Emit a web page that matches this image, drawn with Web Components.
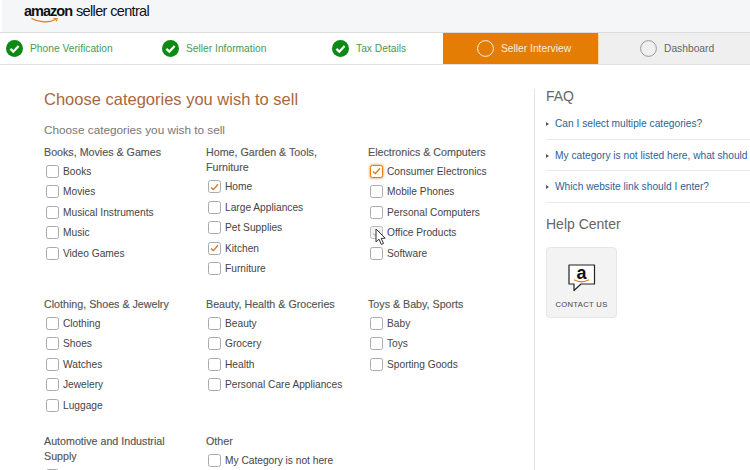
<!DOCTYPE html>
<html lang="en">
<head>
<meta charset="utf-8">
<title>Seller Central</title>
<style>
	html, body { margin: 0; height: 470px; overflow: hidden; background: #fff; }
	body { font-family: 'Liberation Sans', Arial, sans-serif; }
</style>
</head>
<body>
<seller-page>
	<seller-header slot="header"></seller-header>

	<step-bar slot="steps">
		<step-item state="done" width="155" inset="6">Phone Verification</step-item>
		<step-item state="done" width="170" inset="7">Seller Information</step-item>
		<step-item state="done" width="118" inset="7">Tax Details</step-item>
		<step-item state="active" width="156" inset="34">Seller Interview</step-item>
		<step-item state="todo" width="151" inset="41">Dashboard</step-item>
	</step-bar>

	<category-form slot="main">
		<category-group title="Books, Movies &amp; Games">
			<category-check>Books</category-check>
			<category-check>Movies</category-check>
			<category-check>Musical Instruments</category-check>
			<category-check>Music</category-check>
			<category-check>Video Games</category-check>
		</category-group>
		<category-group title="Home, Garden &amp; Tools, Furniture">
			<category-check checked>Home</category-check>
			<category-check>Large Appliances</category-check>
			<category-check>Pet Supplies</category-check>
			<category-check checked>Kitchen</category-check>
			<category-check>Furniture</category-check>
		</category-group>
		<category-group title="Electronics &amp; Computers">
			<category-check checked focused>Consumer Electronics</category-check>
			<category-check>Mobile Phones</category-check>
			<category-check>Personal Computers</category-check>
			<category-check hovered>Office Products</category-check>
			<category-check>Software</category-check>
		</category-group>
		<category-group title="Clothing, Shoes &amp; Jewelry">
			<category-check>Clothing</category-check>
			<category-check>Shoes</category-check>
			<category-check>Watches</category-check>
			<category-check>Jewelery</category-check>
			<category-check>Luggage</category-check>
		</category-group>
		<category-group title="Beauty, Health &amp; Groceries">
			<category-check>Beauty</category-check>
			<category-check>Grocery</category-check>
			<category-check>Health</category-check>
			<category-check>Personal Care Appliances</category-check>
		</category-group>
		<category-group title="Toys &amp; Baby, Sports">
			<category-check>Baby</category-check>
			<category-check>Toys</category-check>
			<category-check>Sporting Goods</category-check>
		</category-group>
		<category-group title="Automotive and Industrial Supply">
			<category-check></category-check>
		</category-group>
		<category-group title="Other">
			<category-check>My Category is not here</category-check>
		</category-group>
	</category-form>

	<help-panel slot="side">
		<faq-link>Can I select multiple categories?</faq-link>
		<faq-link>My category is not listed here, what should</faq-link>
		<faq-link>Which website link should I enter?</faq-link>
	</help-panel>
</seller-page>

<script>
(() => {
	// ==========
	// Templates.
	// ==========

	const CHECK_DONE = `
		<svg width="17" height="17" viewBox="0 0 17 17" aria-hidden="true">
			<circle cx="8.5" cy="8.5" r="8.5" fill="#0c8a14"/>
			<path d="M4.4 8.9 7.3 11.7 12.6 6" fill="none" stroke="#fff" stroke-width="2.3"/>
		</svg>`;

	const RING = `
		<svg width="17" height="17" viewBox="0 0 17 17" aria-hidden="true">
			<circle cx="8.5" cy="8.5" r="7.9" fill="none" stroke="currentColor" stroke-width="1"/>
		</svg>`;

	const CURSOR = `
		<svg class="cursor" width="12" height="18" viewBox="0 0 12 18" aria-hidden="true">
			<path d="M1 1 1 14 4 11.2 6.3 16.4 8.5 15.4 6.2 10.4 10.2 10.2Z" fill="#fff" stroke="#333" stroke-width="1"/>
		</svg>`;

	// ==========
	// Component.
	// ==========

	class Base extends HTMLElement {
		constructor(html) {
			super();
			this.attachShadow({ mode: 'open' }).innerHTML = html;
		}
	}

	class SellerPage extends Base {
		constructor() {
			super(`
				<style>
					:host { display: block; width: 750px; height: 470px; overflow: hidden; }
					.content { display: flex; align-items: stretch; height: 406px; }
					.main { width: 534px; flex: none; }
					.side { flex: 1; min-width: 0; margin-top: 24px; border-left: 1px solid #e4e4e4; }
				</style>
				<slot name="header"></slot>
				<slot name="steps"></slot>
				<div class="content">
					<div class="main"><slot name="main"></slot></div>
					<div class="side"><slot name="side"></slot></div>
				</div>
			`);
		}
	}

	class SellerHeader extends Base {
		constructor() {
			super(`
				<style>
					:host { display: block; height: 32px; margin-left: 2px; background: #f5f6f8; }
					.logo { display: flex; align-items: baseline; padding: 3px 0 0 22px; color: #111; position: relative; }
					.amazon { font-size: 14.5px; font-weight: bold; letter-spacing: -1px; }
					.name { font-size: 14.5px; margin-left: 4px; letter-spacing: -0.65px; }
					svg { position: absolute; left: 29px; top: 18px; }
				</style>
				<div class="logo">
					<span class="amazon">amazon</span><span class="name">seller central</span>
					<svg width="28" height="5" viewBox="0 0 28 5" aria-hidden="true">
						<path d="M0.5 0.5C8 4.6 18 5 25 1.2" fill="none" stroke="#e47911" stroke-width="1.2"/>
						<path d="M22.5 0.4 26.4 0.3 25.2 3.4" fill="none" stroke="#e47911" stroke-width="1"/>
					</svg>
				</div>
			`);
		}
	}

	class StepBar extends Base {
		constructor() {
			super(`
				<style>
					:host { display: flex; height: 31px; border-top: 1px solid #dcdcdc; border-bottom: 1px solid #e2e2e2; }
				</style>
				<slot></slot>
			`);
		}
	}

	class StepItem extends Base {
		constructor() {
			super(`
				<style>
					:host { display: flex; align-items: center; gap: 7px; box-sizing: border-box; font-size: 10.25px; color: #4a9a50; }
					:host([state="active"]) { background: #e47d04; color: #fdeed8; border-right: 1px solid #f8dcae; }
					:host([state="todo"]) { background: #efefef; color: #666; }
					:host([state="todo"]) svg { color: #999; }
					svg { display: block; flex: none; }
				</style>
				<span class="icon"></span>
				<slot></slot>
			`);
		}

		connectedCallback() {
			this.style.width = `${this.getAttribute('width')}px`;
			this.style.paddingLeft = `${this.getAttribute('inset')}px`;
			const icon = this.shadowRoot.querySelector('.icon');
			icon.innerHTML = this.getAttribute('state') === 'done' ? CHECK_DONE : RING;
		}
	}

	class CategoryForm extends Base {
		constructor() {
			super(`
				<style>
					:host { display: block; padding: 24px 0 0 44px; }
					h1 { margin: 0; font-size: 16.5px; line-height: 20px; font-weight: normal; color: #a9673d; }
					h2 { margin: 11.5px 0 6.25px; font-size: 11.75px; line-height: 18px; font-weight: normal; color: #777; }
					.grid { display: grid; grid-template-columns: 162px 162px 162px; grid-template-rows: 152px 137px auto; }
				</style>
				<h1>Choose categories you wish to sell</h1>
				<h2>Choose categories you wish to sell</h2>
				<div class="grid"><slot></slot></div>
			`);
		}
	}

	class CategoryGroup extends Base {
		constructor() {
			super(`
				<style>
					:host { display: block; }
					.title { width: 135px; font-size: 10.7px; line-height: 15.5px; color: #555; -webkit-text-stroke: 0.15px #555; margin-bottom: 1px; }
				</style>
				<div class="title"></div>
				<slot></slot>
			`);
		}

		connectedCallback() {
			this.shadowRoot.querySelector('.title').textContent = this.getAttribute('title');
		}
	}

	class CategoryCheck extends Base {
		constructor() {
			super(`
				<style>
					:host { display: flex; align-items: center; gap: 4px; height: 20.4px; padding-left: 2px; font-size: 10.2px; color: #444; position: relative; }
					.box { width: 11px; height: 11px; flex: none; border: 1px solid #aaa; border-radius: 2.5px; background: #fff; display: flex; align-items: center; justify-content: center; }
					:host([focused]) .box { border-color: #e77c00; box-shadow: 0 0 2px 1px #f3c189; }
					:host([hovered]) .box { border-color: #bbb; background: #f4f4f4; }
					.tick { display: none; }
					:host([checked]) .tick { display: block; }
					:host([hovered]) .tick { display: block; }
					:host([hovered]) .tick path { stroke: #c4c4c4; }
					.cursor { position: absolute; left: 7px; top: 6px; }
				</style>
				<span class="box">
					<svg class="tick" width="9" height="8" viewBox="0 0 9 8" aria-hidden="true">
						<path d="M1 4.4 3.4 6.6 8 1.2" fill="none" stroke="#d9762a" stroke-width="1.4"/>
					</svg>
				</span>
				<slot></slot>
			`);
		}

		connectedCallback() {
			if (this.hasAttribute('hovered')) {
				this.shadowRoot.querySelector('.box').insertAdjacentHTML('afterend', CURSOR);
			}
		}
	}

	class HelpPanel extends Base {
		constructor() {
			super(`
				<style>
					:host { display: block; padding-left: 11px; color: #666; }
					h3 { margin: 0; font-size: 14px; line-height: 18px; font-weight: normal; color: #666; }
					.faq { margin-top: 4px; }
					.help { margin-top: 12px; }
				</style>
				<h3 style="margin-top:-2px">FAQ</h3>
				<div class="faq"><slot></slot></div>
				<h3 class="help">Help Center</h3>
				<contact-card></contact-card>
			`);
		}
	}

	class FaqLink extends Base {
		constructor() {
			super(`
				<style>
					:host { display: block; height: 30.5px; margin-bottom: 1px; box-sizing: border-box; border-bottom: 1px solid #eaeaea; white-space: nowrap; overflow: hidden; font-size: 10.2px; line-height: 30px; color: #2e5f94; }
					i { display: inline-block; vertical-align: 1px; margin-right: 6px; border-left: 3px solid #555; border-top: 2px solid transparent; border-bottom: 2px solid transparent; }
				</style>
				<i></i><slot></slot>
			`);
		}
	}

	class ContactCard extends Base {
		constructor() {
			super(`
				<style>
					:host { display: flex; flex-direction: column; align-items: center; box-sizing: border-box; width: 71px; height: 71px; margin-top: 14px; padding-top: 16px; background: #f3f3f4; border: 1px solid #e6e6e6; border-radius: 4px; }
					svg { display: block; }
					span { margin-top: 7px; font-size: 7.6px; letter-spacing: 0.35px; color: #555; -webkit-text-stroke: 0.1px #555; }
					.mark { font-size: 18px; font-weight: bold; fill: #111; font-family: 'Liberation Sans', Arial, sans-serif; }
				</style>
				<svg width="29" height="29" viewBox="0 0 29 29" aria-hidden="true">
					<path d="M2 1H27.5V20H14L7 26.500V20H2Z" fill="#fff" stroke="#222" stroke-width="1.2" stroke-linejoin="round"/>
					<text class="mark" x="14.500" y="14.500" text-anchor="middle">a</text>
					<path d="M7 15.800C12 18.500 17 18.500 22 15.800" fill="none" stroke="#e47911" stroke-width="1.100"/>
				</svg>
				<span>CONTACT US</span>
			`);
		}
	}

	// ================
	// Define elements.
	// ================

	customElements.define('seller-page', SellerPage);
	customElements.define('seller-header', SellerHeader);
	customElements.define('step-bar', StepBar);
	customElements.define('step-item', StepItem);
	customElements.define('category-form', CategoryForm);
	customElements.define('category-group', CategoryGroup);
	customElements.define('category-check', CategoryCheck);
	customElements.define('help-panel', HelpPanel);
	customElements.define('faq-link', FaqLink);
	customElements.define('contact-card', ContactCard);
})();
</script>
</body>
</html>
